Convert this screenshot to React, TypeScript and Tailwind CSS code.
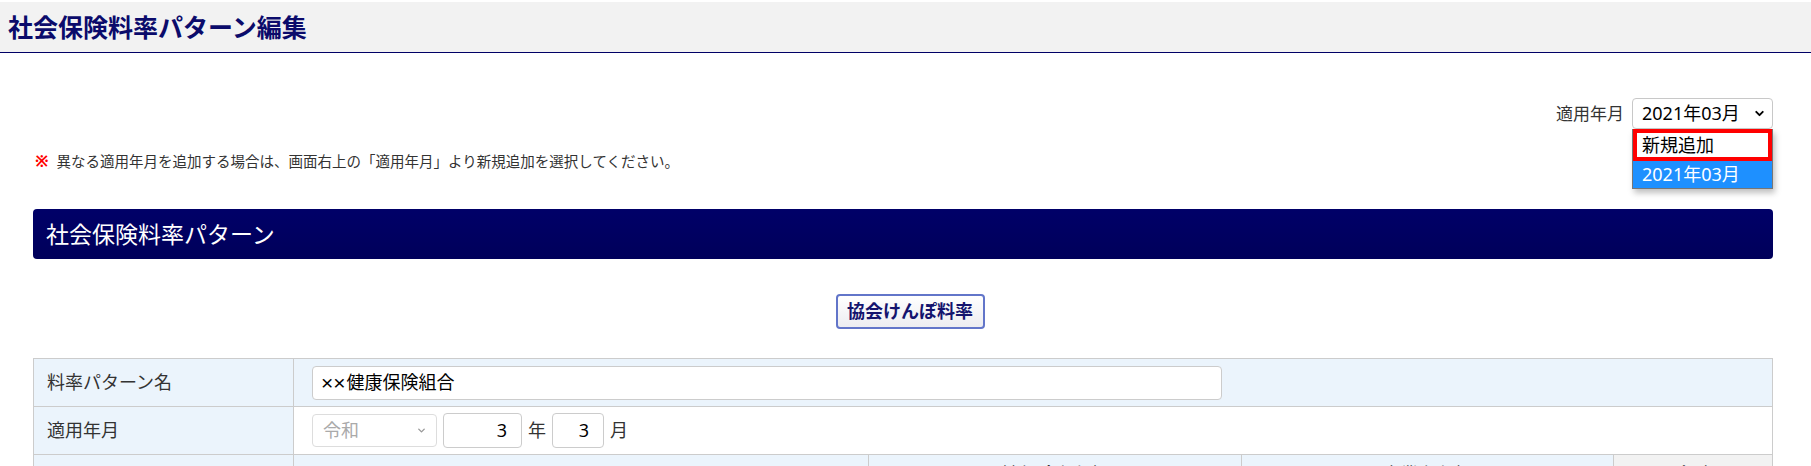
import React from 'react';
import { ChevronDown } from 'lucide-react';

export default function App() {
  return (
    <div className="min-h-screen bg-white pt-[2px] font-['Noto_Sans','Noto_Sans_CJK_JP',sans-serif] text-[#333]">
      {/* Page header */}
      <div className="flex h-[51px] items-center border-b border-[#000066] bg-[#f2f2f2] pl-[8px]">
        <h1 className="text-[25px] leading-none font-bold text-[#0b0b6b]">社会保険料率パターン編集</h1>
      </div>

      <div className="pl-[33px] pr-[38px]">
        {/* Applied month selector */}
        <div className="mt-[45px] flex items-center justify-end gap-[8px]">
          <span className="text-[17px] text-[#333]">適用年月</span>
          <div className="relative">
            <div className="flex h-[31px] w-[141px] items-center justify-between rounded-[4px] border border-[#c8c8c8] bg-white pl-[9px] pr-[6px] text-[18px] text-black">
              <span>2021年03月</span>
              <ChevronDown className="h-[13px] w-[13px]" strokeWidth={3.5} />
            </div>
            {/* Open option list */}
            <div className="absolute left-0 top-full z-10 w-[141px] border-x border-b border-[#767676] bg-white shadow-[2px_4px_6px_rgba(0,0,0,0.25)]">
              <div className="flex h-[32px] items-center border-[4px] border-[#ff0000] pl-[5px] text-[18px] text-black">新規追加</div>
              <div className="flex h-[27px] items-center bg-[#1e90ff] pl-[9px] text-[18px] text-white">2021年03月</div>
            </div>
          </div>
        </div>

        {/* Notice */}
        <p className="mt-[22px] flex items-center text-[14.5px] leading-[20px] text-[#333]">
          <span className="mr-[8px] ml-[2px] text-[16px] font-bold text-[#ff0000]">※</span>
          異なる適用年月を追加する場合は、画面右上の「適用年月」より新規追加を選択してください。
        </p>

        {/* Section bar */}
        <div className="mt-[38px] flex h-[50px] items-center rounded-[4px] bg-gradient-to-b from-[#000068] to-[#00005a] pl-[13px]">
          <h2 className="text-[23px] leading-none text-white">社会保険料率パターン</h2>
        </div>

        {/* Preset button */}
        <div className="mt-[35px] flex justify-center">
          <button
            type="button"
            className="ml-[14px] flex h-[35px] w-[149px] items-center justify-center rounded-[4px] border-2 border-[#6275c9] bg-gradient-to-b from-white to-[#ececf0] text-[18px] font-bold text-[#14146e]"
          >
            協会けんぽ料率
          </button>
        </div>

        {/* Form table */}
        <div className="mt-[29px] border-t border-l border-[#cccccc] text-[18px]">
          <div className="grid grid-cols-[260px_1fr] bg-[#ebf4fc]">
            <div className="flex h-[48px] items-center border-r border-b border-[#cccccc] pl-[13px]">料率パターン名</div>
            <div className="flex h-[48px] items-center border-r border-b border-[#cccccc] pl-[18px]">
              <div className="flex h-[34px] w-[910px] items-center rounded-[4px] border border-[#cccccc] bg-white pl-[8px] text-black">
                <span className="mr-[1px] font-['Liberation_Sans',sans-serif] text-[21px]">××</span>健康保険組合
              </div>
            </div>
          </div>
          <div className="grid grid-cols-[260px_1fr]">
            <div className="flex h-[48px] items-center border-r border-b border-[#cccccc] bg-[#ebf4fc] pl-[13px]">適用年月</div>
            <div className="flex h-[48px] items-center border-r border-b border-[#cccccc] bg-white pl-[18px]">
              <div className="flex h-[33px] w-[125px] items-center justify-between rounded-[4px] border border-[#dddddd] bg-white pl-[10px] pr-[9px] text-[#aaaaaa]">
                <span>令和</span>
                <ChevronDown className="h-[11px] w-[11px] text-[#999]" strokeWidth={3} />
              </div>
              <div className="ml-[6px] flex h-[35px] w-[79px] items-center justify-end rounded-[4px] border border-[#cccccc] pr-[14px] text-black">3</div>
              <span className="mx-[6px]">年</span>
              <div className="flex h-[35px] w-[52px] items-center justify-end rounded-[4px] border border-[#cccccc] pr-[14px] text-black">3</div>
              <span className="ml-[6px]">月</span>
            </div>
          </div>
          <div className="grid grid-cols-[260px_575px_373px_372px_1fr]">
            <div className="h-[40px] border-r border-[#cccccc] bg-[#ebf4fc]"></div>
            <div className="h-[40px] border-r border-[#cccccc] bg-[#ebf4fc]"></div>
            <div className="h-[40px] border-r border-[#cccccc] bg-[#ebf4fc] pt-[6px] text-center">被保険者負担</div>
            <div className="h-[40px] border-r border-[#cccccc] bg-[#ebf4fc] pt-[6px] text-center">事業主負担</div>
            <div className="h-[40px] border-r border-[#cccccc] bg-[#f2f2f2] pt-[6px] text-center">合計</div>
          </div>
        </div>
      </div>
    </div>
  );
}
